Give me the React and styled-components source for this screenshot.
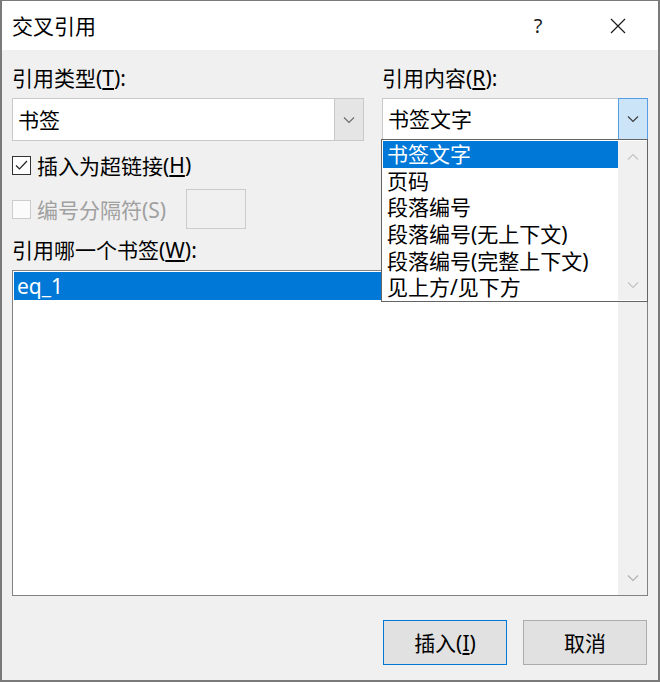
import React from "react";
import styled, { createGlobalStyle } from "styled-components";

const GlobalStyle = createGlobalStyle`
  html, body {
    margin: 0;
    padding: 0;
    background: #ffffff;
  }
  body {
    font-family: "Noto Sans", "Noto Sans CJK SC", sans-serif;
  }
`;

const Window = styled.div`
  width: 660px;
  height: 682px;
  box-sizing: border-box;
  border: 2px solid #7a7a7a;
  border-top-width: 1px;
  display: flex;
  flex-direction: column;
  background: #f0f0f0;
  font-family: "Noto Sans", "Noto Sans CJK SC", sans-serif;
  font-size: 21px;
  color: #000;
  overflow: hidden;
`;

const TitleBar = styled.div`
  height: 49px;
  flex-shrink: 0;
  background: #ffffff;
  display: flex;
  align-items: center;
  padding-left: 10px;
`;

const Title = styled.div`
  flex: 1;
  line-height: 28px;
  margin-top: 1px;
`;

const CaptionButton = styled.div`
  width: 80px;
  height: 49px;
  display: flex;
  align-items: center;
  justify-content: center;
  font-size: 20px;
  color: #1a1a1a;
`;

const Body = styled.div`
  flex: 1;
  display: flex;
  flex-direction: column;
  padding: 14px 10px 0 10px;
`;

const TopGrid = styled.div`
  display: grid;
  grid-template-columns: 352px 266px;
  column-gap: 18px;
`;

const Column = styled.div`
  display: flex;
  flex-direction: column;
`;

const Label = styled.div`
  height: 28px;
  line-height: 28px;
  white-space: nowrap;
  margin-top: ${(p) => p.$mt || 0}px;
`;

const ComboWrap = styled.div`
  position: relative;
  margin-top: 6px;
`;

const Combo = styled.div`
  height: ${(p) => p.$h}px;
  box-sizing: border-box;
  display: flex;
  background: #ffffff;
  border: 1px solid #c9c9c9;
`;

const ComboText = styled.div`
  flex: 1;
  padding-left: 5px;
  display: flex;
  align-items: center;
  line-height: 28px;
`;

const ComboButton = styled.div`
  width: 28px;
  margin: -1px -1px -1px 0;
  display: flex;
  align-items: center;
  justify-content: center;
  background: ${(p) => (p.$active ? "#cce4f7" : "#e5e5e5")};
  border: 1px solid ${(p) => (p.$active ? "#569de5" : "#c9c9c9")};
`;

const DropList = styled.div`
  position: absolute;
  top: 41px;
  left: -1px;
  width: 267px;
  height: 163px;
  box-sizing: border-box;
  border: 1px solid #646464;
  background: #ffffff;
  display: flex;
  padding: 1px 0 1px 1px;
  z-index: 2;
`;

const Items = styled.div`
  flex: 1;
  display: flex;
  flex-direction: column;
`;

const Item = styled.div`
  height: 26.67px;
  line-height: 26.67px;
  padding-left: 4px;
  white-space: nowrap;
  background: ${(p) => (p.$selected ? "#0078d7" : "transparent")};
  color: ${(p) => (p.$selected ? "#ffffff" : "#000")};
`;

const ScrollBar = styled.div`
  width: ${(p) => p.$w || 29}px;
  background: #f0f0f0;
  display: flex;
  flex-direction: column;
  justify-content: ${(p) => p.$justify || "space-between"};
`;

const ScrollArrow = styled.div`
  height: ${(p) => p.$h}px;
  display: flex;
  align-items: center;
  justify-content: center;
`;

const CheckRow = styled.div`
  display: flex;
  align-items: center;
  height: ${(p) => p.$h}px;
  margin-top: 10px;
  color: ${(p) => (p.$disabled ? "#a0a0a0" : "#000")};
  white-space: nowrap;
`;

const Box = styled.div`
  width: 19px;
  height: 19px;
  box-sizing: border-box;
  border: 1px solid ${(p) => (p.$disabled ? "#cccccc" : "#333333")};
  background: ${(p) => (p.$disabled ? "#fbfbfb" : "#ffffff")};
  margin-right: 6px;
  display: flex;
  align-items: center;
  justify-content: center;
  flex-shrink: 0;
`;

const SepInput = styled.div`
  width: 60px;
  height: 40px;
  box-sizing: border-box;
  border: 1px solid #cccccc;
  background: #f0f0f0;
  margin-left: 20px;
`;

const ListBox = styled.div`
  margin-top: 6px;
  height: 326px;
  box-sizing: border-box;
  border: 1px solid #828282;
  background: #ffffff;
  display: flex;
`;

const Rows = styled.div`
  flex: 1;
  padding: 1px 0 0 1px;
`;

const Row = styled.div`
  height: 28px;
  line-height: 28px;
  padding-left: 3px;
  background: ${(p) => (p.$selected ? "#0078d7" : "transparent")};
  color: ${(p) => (p.$selected ? "#ffffff" : "#000")};
`;

const ButtonRow = styled.div`
  margin-top: 24px;
  display: flex;
  justify-content: flex-end;
  gap: 16px;
  padding-right: 1px;
`;

const Button = styled.div`
  width: 124px;
  height: 45px;
  box-sizing: border-box;
  background: #e1e1e1;
  border: 1px solid ${(p) => (p.$default ? "#0078d7" : "#adadad")};
  display: flex;
  align-items: center;
  justify-content: center;
  line-height: 28px;
`;

const Chevron = ({ up, color = "#606060" }) => (
  <svg width="12" height="8" viewBox="0 0 12 8">
    <polyline
      points={up ? "1,6.5 6,1.5 11,6.5" : "1,1.5 6,6.5 11,1.5"}
      fill="none"
      stroke={color}
      strokeWidth="1.1"
    />
  </svg>
);

const CloseIcon = () => (
  <svg width="16" height="16" viewBox="0 0 16 16">
    <path d="M1 1 L15 15 M15 1 L1 15" stroke="#1a1a1a" strokeWidth="1.2" fill="none" />
  </svg>
);

const CheckMark = () => (
  <svg width="15" height="15" viewBox="0 0 15 15">
    <polyline points="2,7.5 5.5,11 13,3" fill="none" stroke="#222" strokeWidth="1.2" />
  </svg>
);

const options = [
  "书签文字",
  "页码",
  "段落编号",
  "段落编号(无上下文)",
  "段落编号(完整上下文)",
  "见上方/见下方",
];

export default function App() {
  return (
    <>
      <GlobalStyle />
      <Window>
        <TitleBar>
          <Title>交叉引用</Title>
          <CaptionButton>?</CaptionButton>
          <CaptionButton>
            <CloseIcon />
          </CaptionButton>
        </TitleBar>
        <Body>
          <TopGrid>
            <Column>
              <Label>
                引用类型(<u>T</u>):
              </Label>
              <ComboWrap>
                <Combo $h={43}>
                  <ComboText>书签</ComboText>
                  <ComboButton>
                    <Chevron color="#6a6a6a" />
                  </ComboButton>
                </Combo>
              </ComboWrap>
              <CheckRow $h={28}>
                <Box>
                  <CheckMark />
                </Box>
                插入为超链接(<u>H</u>)
              </CheckRow>
              <CheckRow $h={40} $disabled>
                <Box $disabled />
                编号分隔符(S)
                <SepInput />
              </CheckRow>
            </Column>
            <Column>
              <Label>
                引用内容(<u>R</u>):
              </Label>
              <ComboWrap>
                <Combo $h={42}>
                  <ComboText>书签文字</ComboText>
                  <ComboButton $active>
                    <Chevron color="#3a3a3a" />
                  </ComboButton>
                </Combo>
                <DropList>
                  <Items>
                    {options.map((o, i) => (
                      <Item key={o} $selected={i === 0}>
                        {o}
                      </Item>
                    ))}
                  </Items>
                  <ScrollBar>
                    <ScrollArrow $h={31}>
                      <Chevron up color="#c2c2c2" />
                    </ScrollArrow>
                    <ScrollArrow $h={31}>
                      <Chevron color="#c2c2c2" />
                    </ScrollArrow>
                  </ScrollBar>
                </DropList>
              </ComboWrap>
            </Column>
          </TopGrid>
          <Label $mt={7}>
            引用哪一个书签(<u>W</u>):
          </Label>
          <ListBox>
            <Rows>
              <Row $selected>eq_1</Row>
            </Rows>
            <ScrollBar $justify="space-between">
              <ScrollArrow $h={34}>
                <Chevron up color="#c2c2c2" />
              </ScrollArrow>
              <ScrollArrow $h={34}>
                <Chevron color="#b0b0b0" />
              </ScrollArrow>
            </ScrollBar>
          </ListBox>
          <ButtonRow>
            <Button $default>
              插入(<u>I</u>)
            </Button>
            <Button>取消</Button>
          </ButtonRow>
        </Body>
      </Window>
    </>
  );
}
